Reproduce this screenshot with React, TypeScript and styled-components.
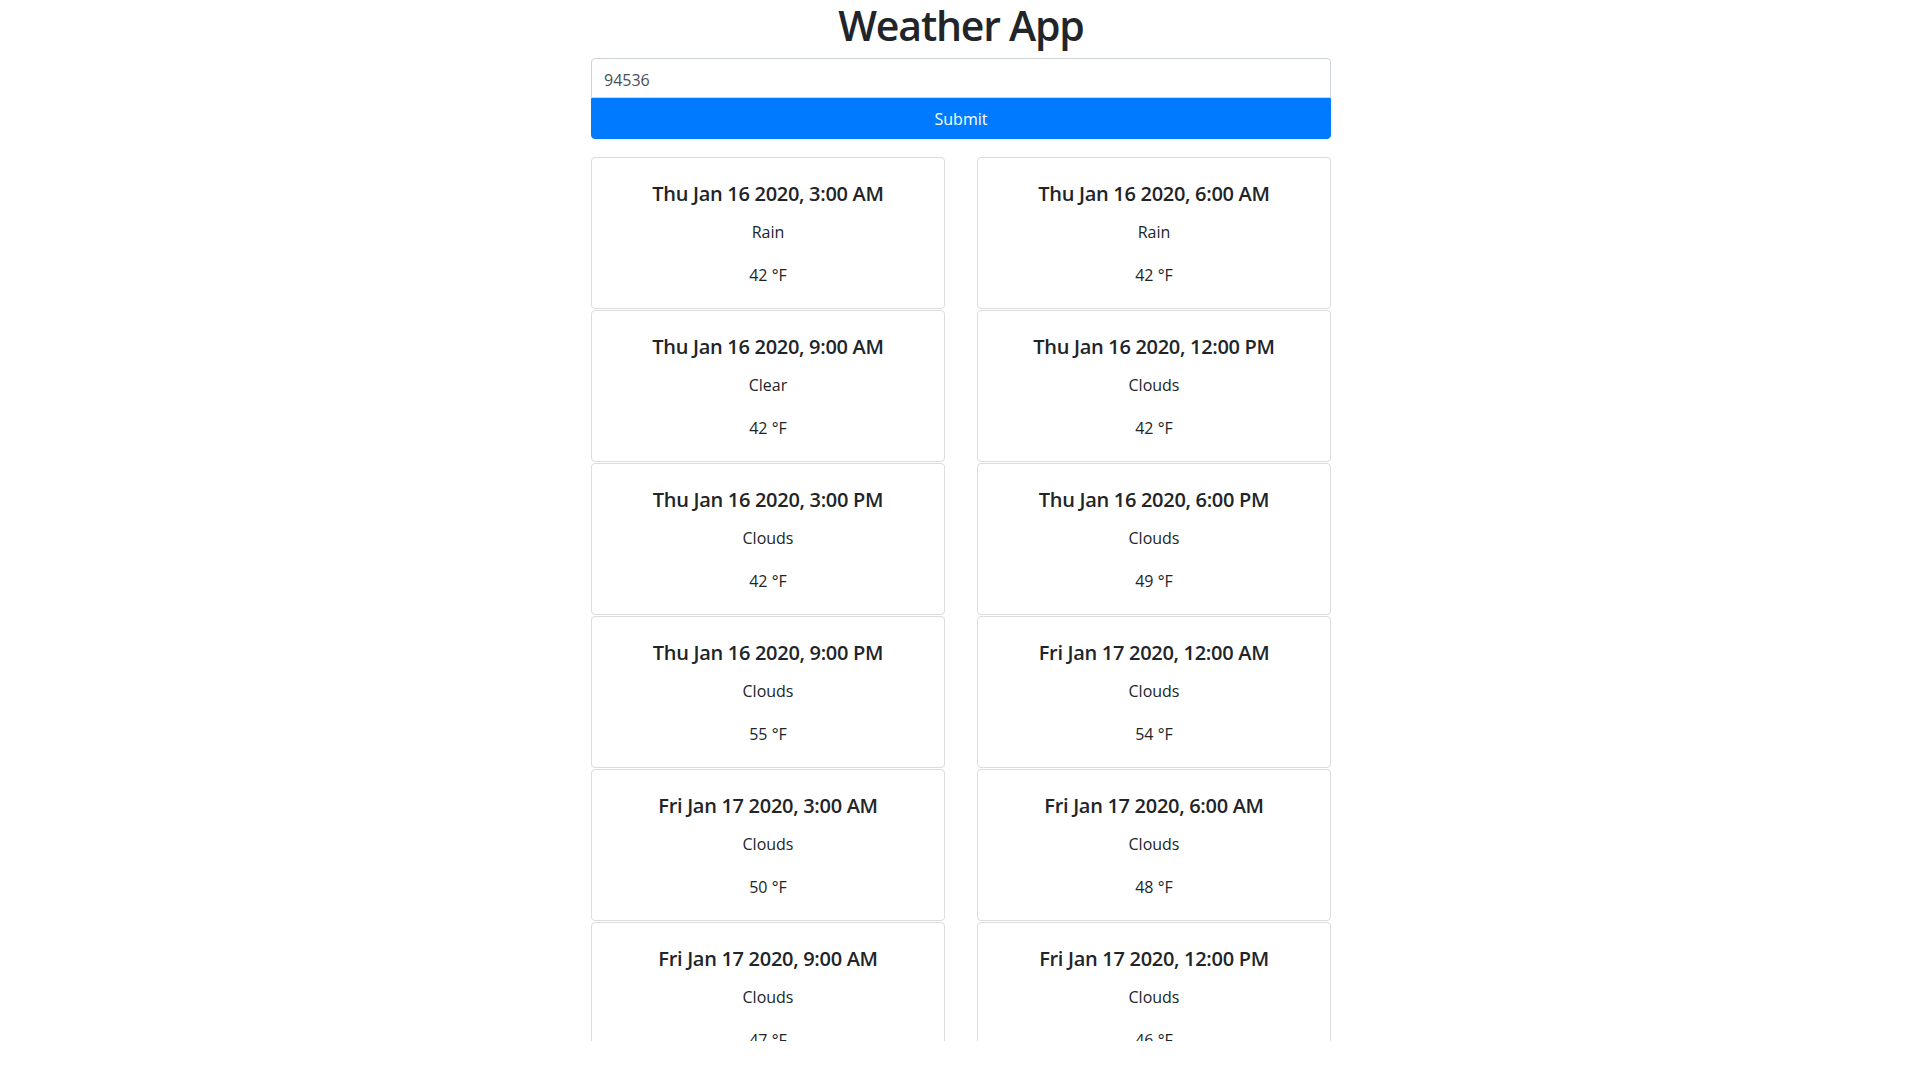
import React from "react";
import styled, { createGlobalStyle } from "styled-components";

const GlobalStyle = createGlobalStyle`
  html, body { margin: 0; padding: 0; background: #fff; }
  body { font-family: "Open Sans", "Noto Sans", sans-serif; color: #212529; }
  * { box-sizing: border-box; }
`;

const Viewport = styled.div`
  height: 1041px;
  overflow: hidden;
`;

const Container = styled.main`
  width: 742px;
  padding-left: 2px;
  margin: 0 auto;
  display: flex;
  flex-direction: column;
`;

const Title = styled.h1`
  margin: 0 0 7.6px;
  font-size: 41px;
  line-height: 50.4px;
  font-weight: 600;
  letter-spacing: -1.2px;
  text-align: center;
  color: #212529;
`;

const Form = styled.form`
  display: flex;
  flex-direction: column;
  margin-bottom: 18px;
`;

const Input = styled.input`
  height: 40px;
  padding: 4px 12px 0;
  font-family: inherit;
  font-size: 16px;
  color: #495057;
  border: 1px solid #ced4da;
  border-radius: 4px 4px 0 0;
  outline: none;
`;

const SubmitButton = styled.button`
  height: 41px;
  border: 1px solid #007bff;
  background: #007bff;
  color: #fff;
  font-family: inherit;
  font-size: 16px;
  border-radius: 0 0 4px 4px;
  cursor: pointer;
`;

const Grid = styled.section`
  display: grid;
  grid-template-columns: 354px 354px;
  column-gap: 32px;
  row-gap: 1px;
`;

const Card = styled.article`
  height: 152px;
  border: 1px solid #dcdcdc;
  border-radius: 4px;
  padding: 24px 20px;
  display: flex;
  flex-direction: column;
  align-items: center;
  text-align: center;
`;

const CardTitle = styled.h5`
  margin: 0 0 14px;
  font-size: 20px;
  line-height: 24px;
  font-weight: 600;
  letter-spacing: -0.3px;
  color: #212529;
`;

const CardText = styled.p<{ $last?: boolean }>`
  margin: 0 0 ${(p) => (p.$last ? 0 : 18.5)}px;
  font-size: 16px;
  line-height: 24px;
  color: #212529;
`;

const forecasts = [
  ["Thu Jan 16 2020, 3:00 AM", "Rain", 42],
  ["Thu Jan 16 2020, 6:00 AM", "Rain", 42],
  ["Thu Jan 16 2020, 9:00 AM", "Clear", 42],
  ["Thu Jan 16 2020, 12:00 PM", "Clouds", 42],
  ["Thu Jan 16 2020, 3:00 PM", "Clouds", 42],
  ["Thu Jan 16 2020, 6:00 PM", "Clouds", 49],
  ["Thu Jan 16 2020, 9:00 PM", "Clouds", 55],
  ["Fri Jan 17 2020, 12:00 AM", "Clouds", 54],
  ["Fri Jan 17 2020, 3:00 AM", "Clouds", 50],
  ["Fri Jan 17 2020, 6:00 AM", "Clouds", 48],
  ["Fri Jan 17 2020, 9:00 AM", "Clouds", 47],
  ["Fri Jan 17 2020, 12:00 PM", "Clouds", 46],
] as const;

export default function App() {
  return (
    <>
      <GlobalStyle />
      <Viewport>
        <Container>
          <Title>Weather App</Title>
          <Form onSubmit={(e) => e.preventDefault()}>
            <Input defaultValue="94536" />
            <SubmitButton type="submit">Submit</SubmitButton>
          </Form>
          <Grid>
            {forecasts.map(([date, desc, temp]) => (
              <Card key={date}>
                <CardTitle>{date}</CardTitle>
                <CardText>{desc}</CardText>
                <CardText $last>{temp} °F</CardText>
              </Card>
            ))}
          </Grid>
        </Container>
      </Viewport>
    </>
  );
}
